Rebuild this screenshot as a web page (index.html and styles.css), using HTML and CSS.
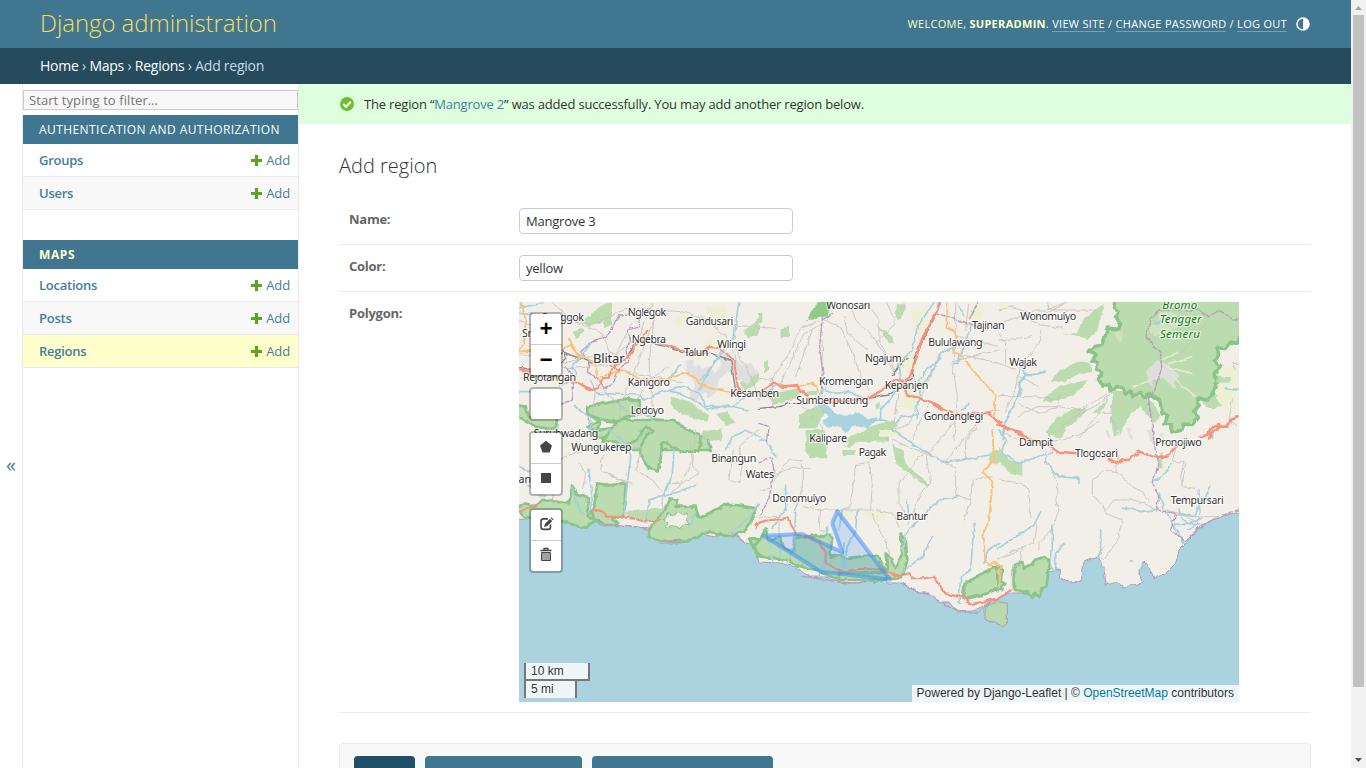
FILE: index.html
```html
<!DOCTYPE html>
<html lang="en">
<head>
<meta charset="utf-8">
<title>Add region | Django site admin</title>
<link rel="stylesheet" href="styles.css">
</head>
<body>
<div class="page">
<div class="container">
  <header class="header">
    <h1 class="site-name">Django administration</h1>
    <div class="user-tools"><span>Welcome, <strong>superadmin</strong>. <a>View site</a> / <a>Change password</a> / <a>Log out</a></span>
      <svg class="theme" width="14" height="14" viewBox="0 0 14 14"><circle cx="7" cy="7" r="6" fill="none" stroke="#fff" stroke-width="1.5"/><path d="M7 1a6 6 0 0 1 0 12z" fill="#fff"/></svg>
    </div>
  </header>
  <nav class="breadcrumbs"><a>Home</a> › <a>Maps</a> › <a>Regions</a> › Add region</nav>
  <div class="main">
    <div class="toggle">«</div>
    <aside class="sidebar">
      <input class="filter" placeholder="Start typing to filter…">
      <section class="module">
        <h2 class="caption auth">Authentication and Authorization</h2>
        <div class="model"><b>Groups</b><a><svg width="11" height="11" viewBox="0 0 11 11"><path d="M3.9 0h3.2v3.9H11v3.2H7.100V11H3.9V7.100H0V3.900h3.900z" fill="#5fa225"/></svg>Add</a></div>
        <div class="model alt"><b>Users</b><a><svg width="11" height="11" viewBox="0 0 11 11"><path d="M3.9 0h3.2v3.9H11v3.2H7.100V11H3.9V7.100H0V3.900h3.900z" fill="#5fa225"/></svg>Add</a></div>
      </section>
      <section class="module">
        <h2 class="caption current">Maps</h2>
        <div class="model"><b>Locations</b><a><svg width="11" height="11" viewBox="0 0 11 11"><path d="M3.9 0h3.2v3.9H11v3.2H7.100V11H3.9V7.100H0V3.900h3.900z" fill="#5fa225"/></svg>Add</a></div>
        <div class="model alt"><b>Posts</b><a><svg width="11" height="11" viewBox="0 0 11 11"><path d="M3.9 0h3.2v3.9H11v3.2H7.100V11H3.9V7.100H0V3.900h3.900z" fill="#5fa225"/></svg>Add</a></div>
        <div class="model selected"><b>Regions</b><a><svg width="11" height="11" viewBox="0 0 11 11"><path d="M3.9 0h3.2v3.9H11v3.2H7.100V11H3.9V7.100H0V3.900h3.900z" fill="#5fa225"/></svg>Add</a></div>
      </section>
    </aside>
    <main class="content-wrap">
      <div class="success"><svg width="14" height="14" viewBox="0 0 14 14"><circle cx="7" cy="7" r="7" fill="#70bf2b"/><path d="M3.300 7l2.700 2.800 4.800-5" fill="none" stroke="#fff" stroke-width="2"/></svg><span>The region “<a>Mangrove 2</a>” was added successfully. You may add another region below.</span></div>
      <div class="content">
        <h1 class="title">Add region</h1>
        <div class="row"><label>Name:</label><input class="field" value="Mangrove 3"></div>
        <div class="row"><label>Color:</label><input class="field" value="yellow"></div>
        <div class="row map-row"><label>Polygon:</label>
          <div class="map">
<svg class="tiles" viewBox="519 302 720 400" width="720" height="400">
<defs><filter id="rough" filterUnits="userSpaceOnUse" x="500" y="290" width="760" height="430"><feTurbulence type="fractalNoise" baseFrequency=".14" numOctaves="2" seed="4"/><feDisplacementMap in="SourceGraphic" scale="4" xChannelSelector="R" yChannelSelector="G"/></filter></defs>
<rect x="519" y="302" width="720" height="400" fill="#aad3df"/>
<g filter="url(#rough)">
<path class="land" d="M510 290V520L539 518 552 520 569 519 582 525 592 519 602 526 619 525 645 528 651 537 662 543 682 543 692 533 716 537 732 530 746 543 754 545 759 562 779 563 796 567 809 577 826 577 839 582 859 583 869 580 889 583 902 583 919 593 929 593 939 602 949 602 957 612 972 611 986 605 989 600 999 597 1012 593 1032 593 1039 597 1047 583 1049 572 1059 570 1061 578 1069 583 1081 582 1084 562 1097 557 1104 567 1106 585 1116 582 1124 587 1142 583 1139 570 1144 562 1149 567 1154 578 1166 573 1176 563 1179 550 1186 543 1199 527 1216 518 1250 509V290Z"/>
<!-- northwest -->
<g transform="translate(519 300) scale(.33333)">
<g class="wood"><path d="M190 60L225 35 255 10 280 10 275 50 240 70 210 80zM455 290L500 300 570 345 565 365 510 350 460 325zM590 340L625 335 650 370 620 375zM255 25l15-10 10 60-25 10zM160 95l35-10 0 15-25 15zM675 95l45-40v50l-30 10zM660 250l60-35v30l-40 30z"/></g>
<g class="urban"><path d="M500 185l20-8 6 20 14-4 10 14 20-10 15 20 20-12 8-30 12 8-6 34-20 22-8 40-20 18-10-20-22 6-8 26-20-8 6-30 14-16-16-22-14-6z"/><path d="M600 170l20-14 12 24 20-12 14 26 30-8 24 34-20 6-14 30-16-18-20 8-8-28-24-6z"/></g>
<g class="farm"><path d="M465 60l30-20 10 30-30 15zM560 20l50-10 20 40-60 20zM510 180l60-70 50 10-70 60z"/></g>
<g class="park"><path d="M205 320l80-15 40-10 40 10-10 35-60 25-50-5-10 30 40-5 60-15 80 15 60 5 90 20 10 40H330l-40-30-50-5-15-25-20-10 35-20-35-20zM-10 315l30 5 10 30 50-10 35 10-5 40-60-10-60-35z"/></g>
<g class="minor"><path d="M0 60l50 20 50-35 120 30 100-50 170 10 140 40 140 10M90 0l70 60 90 40 30 70 80-60 40-100M370 10l35 50-15 130 10 130-20 100M405 60l-60 160-40 90-15 110M230 270l-15 100 10 50M130 45l-30 60 10 100 150-10 100 30 130 20M0 160l130 30 90-20 70-10 50-90M560 60l60 50 30 60M450 200l-60 40-50 80M230 250l100 90 50 5 100 30 80 45M640 130l60 110 20 60"/></g>
<g class="rail"><path d="M-10 200l80 15 60-60 90 35M130 145l10 30-20 20M330 160l25-40 80 15 60 25 80 0 60 20 15 90 20 10"/></g>
<g class="admin"><path d="M220 125l-35 30 25 30-5 30 30 20 20 30 30-20 15-40 30-20-10-35 15-30-10-30 40-10-15-40-50 5-25 50-20 20zM140 200l25 30-5 70-40 15"/></g>
<g class="river"><path d="M-10 25L70 10M215 130l-40 55-20 15 15 15-5 20-45 25M215 240l20 40 120 5 20 15 60-30 50 10 40 20 40 30 60-15 60 15M435 275l60-15 45 20 20 40 80 0 40-30M660 0l-15 110-60 80-40 50M370 330l50 40 60 5 100 45M480 375l30 30M170 320l40 30 5 70M-10 275h50M445 240l40-45M540 270l65-120M0 40l50 5"/></g>
<g class="second"><path d="M5 0l15 60-5 70-20 25 130-5 30-15 20 30 50 20 15 60M0 155l130-20M245 230l65-20 60 30 60 0 70-20 35 15 10 20 60 15 50 10M150 115l30 60"/></g>
<g class="trunk"><path d="M-10 205l190 45 40 20 18-5 12-30 18-2 20-40 28-10 70-90M275 200l25 8M440 135l60 20M500 155l50 10 20-25 30 5 45 35 12 90 15 5"/></g>
</g>
<!-- southwest -->
<g transform="translate(519 430) scale(.33333)">
<g class="wood"><path d="M550 5l60-10v40l-55-10zM320 245l110-10-10 35-90 0z"/></g>
<g class="park"><path d="M250 35l45-65 170 0 30 25 50 20-5 50-50 0-60-30-5 50-10 40-30-15-25-50 20-40 20-20-20-10-25 40-45 20-20-15z"/><path d="M-10 235l30-15 30 10 20-20 80 10 10-55 15 30 35 10-5 40 15 0 5 30-20 10-10 10-60-20-60-5-60-10zM235 160l40 5 45-5-5 100-35 5 20 20-45 0-25-15-25-10 20-25z"/><path d="M390 300l45-60 20-35 20 5-5 20 60 0 10 35 75-40 40 0 55 10-15 40-15 25-45 20-65-15-35 15-30 15-60 0-55-15z"/><path d="M690 325l40 0 0 50-15 5z"/></g>
<path d="M445 250l18 6 15-11 15 9 12-4-4 18 10 16-18-2-10 14-18-8-24 6 6-16-12-8 12-10z" fill="#f2efe9" stroke="#88c187" stroke-width="3"/>
<g class="minor"><path d="M390 0l-35 30 10 30-15 60 50 30 40 50 40-30 40-80-10-70M0 140l60 60 40 10 10-60-20-60M180 100l20 30-10 50 20 50M250 80l-5 40 80 40M640 60l-10 90 30 10M660 160l10-60-10-50 60-50M530 0l-10 110 20 20-50 30-50 0M100 100l60-30 80-20M430 200l0 70-60 30M340 160l-60-20"/></g>
<g class="river"><path d="M270 0l50 40 15 40-10 80-10 90M0 110l40 20-10 40 50 30M210 120l10 90-10 40M465 60l-5 75-25 60-45 15-10 70M435 200l60-20 40-15M720 220l-20 30-40 40-30 20M620 60l20-40 40-20 40 20M510 290l20-40M160 170l25 80"/></g>
<g class="trunk"><path d="M-10 250l70-30M220 240l20 0 25 20 60 0 50 15 50-5M710 295l15-20"/></g>
<g class="admin"><path d="M240 270l20 15 50 0 80 10M430 335l60-5M640 310l40 30"/></g>
</g>
<!-- north centre -->
<g transform="translate(759 300) scale(.33333)">
<g class="wood"><path d="M65 85l25-5v30l-25 5zM410 10h30v20l-20 30-10-10zM355 80l45 30 5 20-15 0zM15 185l15-5v30l-15 10zM25 285l90-20 10 25-80 25zM120 345l50-25 30 15-30 50h-50zM350 310l15-5v20h-15zM0 40h10v30H0zM280 405l60-15 50 15v20H250zM140 275l35-5v15h-35z"/><path d="M140 65l15-20 25-45h40l-15 50-25 0z" fill="#8fcb88"/></g>
<g class="farm"><path d="M450 20l60 10-10 80-30-10zM440 280l50-50 30 10-60 90-40-10zM430 170l30-20 20 50-40 30zM620 30l50-15v40l-40 10z"/></g>
<g class="minor"><path d="M30 250l60-90 30-70 60-30M65 250l70-150 60-30M110 230l50-140M195 60l50 20 40 90 20 60 25 40M255 50l10 50 60 50M320 0l40 60 0 60 50 100M380 0l30 70-60 60M270 0l20 60 60 60 50 90M590 0v130l-10 60 15 100-10 130M540 170l-40 90-50 110-60 30M590 60l60 20M590 160l130 30M580 185l140-35M420 280l-15 90-20 50M510 310l-30 60-20 50M190 120v80l10 80-40 50M130 320l60 60 0 40M630 0l-10 90M0 240l40-5 0 90M600 110l120 30M620 350l100-20"/></g>
<g class="rail"><path d="M525 55l-60 120-5 60-70 50-60 10M400 225l30-40 20-10M0 325l60-5 30-10 40 0"/></g>
<g class="admin"><path d="M190 50l-8 90 8 70-3 70M190 60l30-20M530 40l100 30 60 20M660 0l-30 60M0 370l30 10-5 50"/></g>
<path class="lake" d="M170 310l30 5 30 30 30 5 30-10 40 20 25-5-30 25-45-5-20 20-20-20-30 5-15-15 15-20-20-15z"/>
<g class="river"><path d="M310 365l60-5 40 10 20-20 40-5M365 360l0-30 35-40 25-60-5-40 40-40 15-70 55-80M590 140l-40 15-25 50-40 60-10 50 0 40M635 80l-20 60-20 50-15 0M540 0l-10 40M170 300l20-30 40 10 40-5 40 20M0 300l20-20 40-30 20 10M600 20l15 30M610 330l20-20M475 260l20-45 50-40"/></g>
<g class="second"><path d="M565 0l0 80 30 30-15 45 25 10 45 55 60 65-5 70 15 10M55 255l60 5 40-10 20 10 2 15"/></g>
<g class="trunk wide"><path d="M545 0l-15 40-40 75-35 110-15 20M10 270l35-22 25 12 45-5 8 20 10 0 12 15M190 307l60-5 75-5 50-30 35-30 30 15 0 30 60 20 40 20 40 15M585 345l40-2 60-5 40 30"/></g>
</g>
<!-- south centre -->
<g transform="translate(759 430) scale(.33333)">
<g class="wood"><path d="M140 0h60l5 85-50 0-15-20zM290 20l40-30 70-20 20 20-50 20-70 20-20 20-25 0zM400 40l30 20 10 40 30 30 30 20 10 20-40-20-30-30-30-20zM690 70l30-10v40l-25 0zM250 60l40 0v15h-40z"/></g>
<g class="farm"><path d="M240 240h40v30h-40zM360 0h60v20h-60zM310 250l70-10 0 30-50 0z"/></g>
<g class="park"><path d="M-15 350l20-25 15-30 10 40 30-15 15 35 30 10 0-40 25-5 20 0 20-5 25 5 15-10 10 15-5 30 0 25 30-5 15 10 80-10 20 5 15 35 25 30-50 10-60-15-60 5-60-25-60-15-25-15-80-10z"/><path d="M385 425l-5-55 15 15 15 30 20-45-5-60 15 20 5 60-10 35-15 20-60 5-50 0-70 0 0-20z"/><path d="M612 500l5-40 38-20 45-28h20v62l-40 18-60 15z"/></g>
<g class="minor"><path d="M0 140l30 5 60-30 60 0M0 180l30-5 60-90 40 10v80l-10 30M330 95l-40 10-10 80-10 50-40 10M330 100l10 60-5 80M180 240l60 0 100 0 60 10 20 40M340 250l50 110 5 50M130 230l55 10-5 60 40 10M400 30l50 20 50 20 60 30 30 15 0 80 45 15 5-60 60-10M500 70l15 90-30 30-35 90M490 70l-70 90 0 60 30 50M560 100l60-10 0-60 50-60M560 95l90-110M0 260l60 0 0 60M635 210l-20 60M510 70l80-100M470 130l40 35"/></g>
<g class="river"><path d="M400 0l60 40 30 20 60 35 90-10 50-10M600 200l-60 10-40 40-60 60-10 50M450 270l-5-60M520 320l-30 60-60 45M645 280l-10 140-30 20-5 80M295 240l-5 60-25 50-10 60M80 165l0 70-40 60M120 200l-10 40M205 290l5 60-30 90M110 250l-5 90-20 60M250 240l-10 60M720 340l-30 20-15 40M55 320l10 60M30 320l10 90M255 340l-5 80M0 30l20 0 30 50"/></g>
<g class="admin"><path d="M0 95l40-10 5 40-15 80-25 50M130 440l40 5 100 15 60-5M430 460l50 30 30 0M535 510l60 35 60 5 40-35"/></g>
<g class="trunk"><path d="M-10 285l25-12 75-10 5 20 20 32 35 5 30 15 20 35 0 30 50 25 50-8 60 0 45 18 25 0 25-5 5 15 40 0 25-5 15 20 5 20 30 15 45 10 15 17 30-5 50-10 40-25"/></g>
<g class="second"><path d="M700 0l5 90-35 35 30 30-10 120-20 40 10 80 10 10 20-10"/></g>
</g>
<!-- northeast -->
<g transform="translate(999 300) scale(.33333)">
<g class="wood"><path d="M185 100l40 5 40 15 30-30 20-80-40 30-20 15-20 40-30 10zM155 245l20-30 60-30 40 0 5 30-50 10-30 20zM130 305l40-40 60-20 40-5-50 50-70 15zM140 395l30-40 60-30 40 0-40 40-50 30-30 15zM345 270l60 10 60 30 20 40-20 20-40-50-30 20-30 60-20 10-10-50zM280 340l55-55-30 50zM600 270l60 10 30 20-40 30-30-10z"/></g>
<g class="farm"><path d="M640 180l40 20 40-5v80l-50 20-60-30zM650 290l60-20v50l-30 10zM0 0h30v20H0z"/></g>
<g class="park big"><path d="M350-15l-5 35 12 20-5 12 10 18-2 18-35-4-8 30-8 22-20 2-22 18 25 8-12 16 12 8 3 20 15 8-15 26 20 14 15-3 3 20 25-14 17 8 3 14 16-8 8 16 22-12 12 18 16-15 15 12 15 10 7 40 18 0-10 32 20 0-2 22 35-6 2-18 28 2 18-20-12-22 15-16-6-22 30 6 14-14 14-40-8-26 20-22-16-14 10-22-6-18 26 2 16-20 18 4 20-40 20-8V-20z"/></g>
<g class="urban"><path d="M440 210l30-25 10-5 30 15 30 35-15 20 10 25-40-40-30 5-5 25-20-40z" opacity=".9"/><path d="M480 180l60-20M510 190l70-20M500 200l80 20M520 230l70 60M460 240l-60 20" stroke="#e1ead5" stroke-width="5"/></g>
<g class="farm"><path d="M485 30l50 10 0 40-70 30-15-30 20-10zM345 90l30 10-10 30-10-10z" opacity=".4"/></g>
<path d="M652 231h43v17h-43z" fill="#b7ddb4"/>
<g class="minor"><path d="M0 30l40-10 80 30 80-40M0 70l60-20 70 25 60 10M125 90v30l-60 80-20 80-30 60M0 290l100 0 80 10M60 310l60 30 60-20 60 10 100-55M0 120l100-10M0 190l50 20M345 275l-50 40-60 30-60 50M345 280l-10 60 20 60M180 290l-5 30-60 0-60 30M100 30l40 0 80-30M60 230l60 30M700 300l-10 60 30 20M720 190l-20 0 10 20M540 170l80-100M240 415l60-75 30 0M0 100l20 30 0 60M145 0l5 30 130 0"/></g>
<g class="admin"><path d="M540 25l-60 5-25 30-15 50 45 50 3 45-20 60-20 30 10 70 5 50M540 30l20 0 40 0 30 20 30-20 40 30 20 0"/></g>
<g class="river wide"><path d="M135 215l-25 10-30 0-10-20M80 225l-20 25 5 30-15 25-30 60-10 50M680 265l40 5M640 380l0 30M490 60l-20 10"/></g>
<g class="trunk wide"><path d="M-5 372l50 20 30 20M720 350l-25 10-10 20-20 0-30 20-5 20"/></g>
</g>
<!-- southeast -->
<g transform="translate(999 430) scale(.33333)">
<g class="wood"><path d="M0 50l30 40 40 10 0 40-40-10-30-40zM480 75l10-10v50l-10 0zM160 15l30-20 10 10-20 20zM390 390h15v5h-15z"/></g>
<g class="park"><path d="M48 480l-5-30 5-45 22-10 4 18 24-10 10-14 28-8 18 15-6 20-5 55-20 10 0 18-15-10-10 15-10-16z"/><path d="M-5 405l15 20-5 25 15 10-10 10 0 10h-15z"/></g>
<path d="M-42 540l8-15 30-10 29 5 0 55-12 15-25-10-30-15z" fill="#bbd9ae" stroke="#a5a0aa" stroke-width="3"/>
<g class="urban"><path d="M320 0l8 0 6 24-8-4zM352 0l10 0 4 24-10-6zM384-6l10 0 8 40-10-10zM446 0h10l10 40-10-6zM486 10h8l-4 30z"/></g>
<g class="minor"><path d="M0 150l70 10 20 20 5 80 20 20-10 60-60 20-50 30M140 60v40l20 20 20 60-10 30 10 30-20 60-40 40 0 20M315 120l-35 30 0 50 30 20 10 30 50 20-15 60-40 60-20-10 20-30M320 120l40 10 40 40 30 15 20 30M320 240l25-30 60 0 40 15 30 20M360 70l-10 60M555 90l-10 50 5 30 40 10 20 40-15 60M530 60l-10 30 20 10 10-10 10 10-10 60M520 250l60 10 80 0M0 0l60 30M160 35l80-20 60-40M500 240l40 10 40 20M70 350l-5 40-25 30 0 60M0 390l60-30"/></g>
<g class="river"><path d="M0 0l20 30-10 40 50 30 100-35M140 90l20 30 20 20 60 5 0 15M125 245l-20 40-60 40-50 30M160 285l0 70-5 50 10 20M195 340l-25 30 0 60M305 300l0 60-10 30M370 235l30 0 25 10 40-5M515 100l-10 20-20 20-25 15M480 190l15 50 20 30 40 70M635 170l-15 30-20 10-15 50-45-10M600 180l0 60M540 240l10 30 40 15M520 280l30 5 60-20M430 400l5 20M565 300l40-20"/></g>
<g class="admin"><path d="M460 0l10 70 10 30-20 60 20 40-10 40 60 10-15 50 45 35 50-50 50-25 70-25"/></g>
<g class="trunk wide"><path d="M20-5l40 10 20 15 60 25 35 20 60 5M330 90l30 10 10-10 20 0 30-25 45 15 40 0 25-30M605 20l20-5 10-20 25-10"/></g>
<g class="second"><path d="M-10 400l20 10-15 15 10 15-10 30"/></g>
</g>
</g>
<g class="labels">
<text x="542" y="320.500" textLength="42">Ponggok</text><text x="522" y="336.700" textLength="37">Srengat</text><text x="627.700" y="316" textLength="38.500">Nglegok</text><text x="685.700" y="325" textLength="47.600">Gandusari</text><text x="631.700" y="343" textLength="34.300">Ngebra</text><text class="town" x="593" y="362.700" textLength="31.500">Blitar</text><text x="684" y="355.700" textLength="24.300">Talun</text><text x="717.300" y="347.500" textLength="28.700">Wlingi</text><text x="523" y="380.700" textLength="53">Rejotangan</text><text x="627.700" y="385.700" textLength="42.300">Kanigoro</text><text x="730.300" y="397.300" textLength="48.700">Kesamben</text><text x="630.700" y="413.700" textLength="33.300">Lodoyo</text><text x="533.700" y="437.300" textLength="64.600">Suruhwadang</text><text x="571.300" y="451.300" textLength="60.400">Wungukerep</text><text x="711.300" y="462.300" textLength="45">Binangun</text><text x="745.700" y="477.700" textLength="28.300">Wates</text><text x="531" y="482.700" text-anchor="end">an</text>
<text x="826.300" y="309" textLength="44">Wonosari</text><text x="819" y="385" textLength="54.300">Kromengan</text><text x="865" y="362.300" textLength="36.700">Ngajum</text><text x="884.700" y="389" textLength="43.600">Kepanjen</text><text x="796.300" y="403.700" textLength="72">Sumberpucung</text><text x="928.300" y="346" textLength="54.400">Bululawang</text><text x="972" y="328.700" textLength="32.700">Tajinan</text><text x="923.700" y="420" textLength="59.600">Gondanglegi</text><text x="809.300" y="441.500" textLength="37.700">Kalipare</text><text x="858.700" y="456" textLength="27.600">Pagak</text><text x="772.300" y="501.500" textLength="54">Donomulyo</text><text x="896.300" y="519.500" textLength="31.400">Bantur</text>
<text x="1020.300" y="320" textLength="56">Wonomulyo</text><text x="1009.300" y="366" textLength="27.700">Wajak</text><text x="1019" y="446.300" textLength="34">Dampit</text><text x="1075" y="457" textLength="43">Tlogosari</text><text x="1155.300" y="446" textLength="46.400">Pronojiwo</text><text x="1170.700" y="504" textLength="53">Tempursari</text>
<g class="green"><text x="1162.300" y="308.500" textLength="35">Bromo</text><text x="1159.700" y="323" textLength="42">Tengger</text><text x="1160" y="337.500" textLength="40">Semeru</text></g>
</g>
<path class="region" d="M837.300 511L832.300 523.300 842.300 552.300 802.300 534 764 535.700 820.700 571.700 890 579.500Z"/>
</svg>
            <div class="controls">
              <div class="bar"><a class="sign">+</a><a class="sign">−</a></div>
              <div class="bar"><a></a></div>
              <div class="bar"><a><svg width="30" height="30" viewBox="0 0.7 30 30"><path d="M15 8.500l6 4.800-2.400 7h-7.200L9 13.300z" fill="#464646"/></svg></a><a><svg width="30" height="30" viewBox="0 1 30 30"><path d="M10 10h10v10H10z" fill="#464646"/></svg></a></div>
              <div class="bar edit"><a><svg width="30" height="30" viewBox="0 0.6 30 30"><path d="M17 9.500h-4.500q-2.500 0-2.500 2.500v5.500q0 2.500 2.500 2.500H17q2.500 0 2.500-2.500v-2.500" fill="none" stroke="#464646" stroke-width="1.600"/><path d="M13 17.500l1-3.200 5-5 2.200 2.200-5 5zM19.600 8.600l.8-.8 2.200 2.200-.8.800z" fill="#464646"/></svg></a><a><svg width="30" height="30" viewBox="0 1 30 30"><path d="M9.500 10.500h11M13 10V8.500h4V10" fill="none" stroke="#464646" stroke-width="1.300"/><path d="M10.500 12.500h9v8h-9z" fill="#a0a0a0" stroke="#464646" stroke-width="1"/></svg></a></div>
            </div>
            <div class="scale"><div class="km">10 km</div><div class="mi">5 mi</div></div>
            <div class="attribution">Powered by Django-Leaflet | © <a>OpenStreetMap</a> contributors</div>
          </div>
        </div>
        <div class="submit-row"><div class="btn default">Save</div><div class="btn another">Save and add another</div><div class="btn continue">Save and continue editing</div></div>
      </div>
    </main>
  </div>
</div>
<div class="scrollbar"><svg width="15" height="15" viewBox="0 0 15 15"><path d="M4 10h7L7.500 6z" fill="#a3a3a3"/></svg><div class="thumb"></div><svg class="down" width="15" height="15" viewBox="0 0 15 15"><path d="M4 5h7L7.500 9z" fill="#505050"/></svg></div>
</div>
</body>
</html>
```

FILE: styles.css
```css
*{box-sizing:border-box}
html,body{margin:0;height:100%;overflow:hidden}
body{font:13px "Open Sans","Noto Sans",sans-serif;color:#333;background:#fff}
h1,h2{margin:0;font-weight:400}
.page{display:flex;height:768px;overflow:hidden}
.container{flex:1;min-width:0;display:flex;flex-direction:column;height:768px}
.header{flex:none;height:48px;padding:0 41px 0 40px;background:#417690;color:#ffc;display:flex;justify-content:space-between;align-items:center}
.site-name{font-size:24px;font-weight:300;color:#f5dd5d;line-height:30px;letter-spacing:-.06px;padding-bottom:2px}
.user-tools{display:flex;align-items:center;gap:9px;font-size:11px;letter-spacing:.3px;text-transform:uppercase;white-space:nowrap}
.user-tools span{padding-bottom:2px}
.user-tools a{color:#fff;border-bottom:1px solid rgba(255,255,255,.3)}
.theme{display:block}
.breadcrumbs{flex:none;height:36px;padding:0 40px;background:#264b5d;color:#c4dce8;font-size:14px;line-height:36px;letter-spacing:-.24px}
.breadcrumbs a{color:#fff}
.main{flex:1;min-height:0;display:flex}
.toggle{width:23px;flex:none;border-right:1px solid #eaeaea;display:flex;align-items:center;justify-content:center;color:#447e9b;font-size:20px;padding-top:76px}
.sidebar{width:276px;flex:none;border-right:1px solid #eaeaea;padding-top:6px}
.filter{display:block;width:275px;height:20px;margin:0 0 5px;border:1px solid #ccc;background:#f8f8f8;padding:1px 5px;font:13px "Open Sans","Noto Sans",sans-serif;letter-spacing:.08px}
.filter::placeholder{color:#757575}
.module{margin-bottom:30px}
.caption{height:29px;background:#417690;color:#fff;padding-left:16px;font-size:12px;line-height:29px;text-transform:uppercase;letter-spacing:.43px;white-space:nowrap}
.caption.current{color:#ffc;font-weight:700;letter-spacing:.6px}
.model{height:33px;border-bottom:1px solid #eaeaea;padding:0 8px 0 16px;display:flex;justify-content:space-between;align-items:center;color:#447e9b}
.model b{font-weight:600;letter-spacing:-.25px}
.model a{display:flex;align-items:center;gap:4px;letter-spacing:-.1px}
.alt{background:#f8f8f8}
.selected{background:#ffc}
.content-wrap{flex:1;min-width:0}
.success{height:40px;background:#dfd;padding-left:41px;display:flex;align-items:center;gap:10px;white-space:nowrap;letter-spacing:-.185px}
.success a{color:#447e9b}
.content{padding:30px 40px 0}
.title{font-size:20px;line-height:24px;font-weight:300;margin-bottom:20px}
.row{height:47px;display:flex;padding:10px 0;border-bottom:1px solid #eaeaea}
.row label{width:180px;padding-left:10px;font-weight:700;color:#666;line-height:22px;flex:none;letter-spacing:-.25px}
.field{width:274px;height:26px;border:1px solid #ccc;border-radius:4px;padding:0 6px;font:13px "Open Sans","Noto Sans",sans-serif;color:#333;letter-spacing:-.22px}
.map-row{height:421px}
.map{position:relative;width:720px;height:400px;overflow:hidden}
.tiles{display:block}
.land{fill:#f2efe9;stroke:#b09cb4;stroke-width:1}
.wood{fill:#bcdbae}
.farm{fill:#eef0d5}
.urban{fill:#e0dfdf}
.park{fill:#bbdcae;stroke:#8bc389;stroke-width:8;stroke-linejoin:round}
.park.big{stroke-width:10}
.minor,.rail,.admin,.river,.second,.trunk{fill:none;stroke-linejoin:round;stroke-linecap:round}
.minor{stroke:#c4c1be;stroke-width:2.500}
.rail{stroke:#898685;stroke-width:4}
.admin{stroke:#b79bbb;stroke-width:4;stroke-dasharray:12 5}
.river{stroke:#a5d0de;stroke-width:5}
.river.wide{stroke-width:7}
.lake{fill:#aad3df;stroke:#aad3df;stroke-width:6}
.second{stroke:#fac077;stroke-width:5.500}
.trunk{stroke:#f8917b;stroke-width:6}
.trunk.wide{stroke-width:7.500}
.labels{font-family:"Noto Sans",sans-serif;font-size:10.700px;fill:#303030;stroke:#fff;stroke-opacity:.65;stroke-width:2.500px;paint-order:stroke;stroke-linejoin:round}
.labels .town{font-size:13px}
.labels .green{font-size:11.500px;font-style:italic;fill:#148014}
.region{fill:#38f;fill-opacity:.2;stroke:#38f;stroke-opacity:.5;stroke-width:4;stroke-linejoin:round}
.controls{position:absolute;left:10px;top:10px;display:flex;flex-direction:column;gap:10px}
.bar{border:2px solid rgba(0,0,0,.25);border-radius:4px;background:#fff;background-clip:padding-box;width:34px}
.bar a{display:block;width:30px;height:30px;overflow:hidden}
.bar a+a{height:31px;border-top:1px solid #ccc}
.bar svg{display:block}
.edit{margin-top:2px}
.bar .sign{font:bold 22px/30px "Liberation Mono",monospace;text-align:center;color:#000;padding-top:2px}
.scale{position:absolute;left:5px;bottom:4px;font:12px/16px "Liberation Sans",sans-serif;color:#333}
.km,.mi{height:18px;border:2px solid #777;border-top:0;background:rgba(255,255,255,.8);padding-left:5px;width:66px;line-height:17px;text-shadow:1px 1px #fff}
.mi{width:53px;height:17px;border-bottom:0}
.attribution{position:absolute;right:0;bottom:0;height:17px;padding:0 5px;background:rgba(255,255,255,.8);font:12px/16px "Liberation Sans",sans-serif;color:#333;white-space:nowrap}
.attribution a{color:#0078a8}
.submit-row{margin-top:30px;height:61px;border:1px solid #eaeaea;border-radius:4px;background:#f8f8f8;padding:12px 14px;display:flex;gap:10px}
.btn{height:35px;border-radius:4px;background:#417690;color:#fff;text-align:center;line-height:35px;white-space:nowrap}
.default{width:61px;background:#205067}.another{width:157px}.continue{width:181px}
.scrollbar{width:15px;flex:none;background:#f1f1f1;display:flex;flex-direction:column;align-items:center}
.scrollbar svg{display:block;flex:none}
.thumb{width:11px;height:672px;background:#c1c1c1}
.down{margin-top:auto}
```
